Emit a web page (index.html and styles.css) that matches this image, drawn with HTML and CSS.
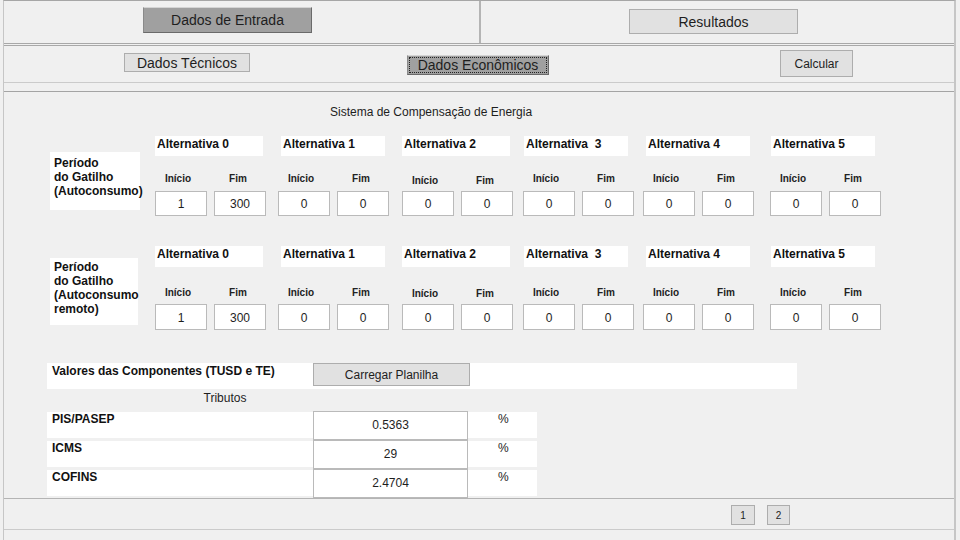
FILE: index.html
```html
<!DOCTYPE html>
<html lang="pt-BR">
<head>
<meta charset="utf-8">
<title>Sistema de Compensação de Energia</title>
<link rel="stylesheet" href="styles.css">
</head>
<body>
<div class="frame">
  <div class="top-bar">
    <div class="tab-half tab-half--left">
      <div class="btn btn--pressed btn--entrada">Dados de Entrada</div>
    </div>
    <div class="tab-half tab-half--right">
      <div class="btn btn--resultados">Resultados</div>
    </div>
  </div>

  <div class="sub-bar">
    <div class="btn btn--tecnicos">Dados Técnicos</div>
    <div class="btn btn--pressed btn--economicos"><span class="focus">Dados Econômicos</span></div>
    <div class="btn btn--calc">Calcular</div>
  </div>

  <div class="spacer-bar"></div>

  <main class="content">
    <div class="title">Sistema de Compensação de Energia</div>

    <section class="block block--1">
      <div class="period period--1">Período<br>do Gatilho<br>(Autoconsumo)</div>
      <div class="groups">
        <div class="group"><div class="alt-head">Alternativa 0</div><div class="sub"><span>Início</span><span>Fim</span></div><div class="pair"><div class="field">1</div><div class="field">300</div></div></div>
        <div class="group"><div class="alt-head alt-head--shift">Alternativa 1</div><div class="sub"><span>Início</span><span>Fim</span></div><div class="pair"><div class="field">0</div><div class="field">0</div></div></div>
        <div class="group"><div class="alt-head">Alternativa 2</div><div class="sub sub--low"><span>Início</span><span>Fim</span></div><div class="pair"><div class="field">0</div><div class="field">0</div></div></div>
        <div class="group"><div class="alt-head alt-head--shift1">Alternativa&nbsp; 3</div><div class="sub"><span>Início</span><span>Fim</span></div><div class="pair"><div class="field">0</div><div class="field">0</div></div></div>
        <div class="group"><div class="alt-head alt-head--shift">Alternativa 4</div><div class="sub"><span>Início</span><span>Fim</span></div><div class="pair"><div class="field">0</div><div class="field">0</div></div></div>
        <div class="group"><div class="alt-head alt-head--shift1">Alternativa 5</div><div class="sub"><span>Início</span><span>Fim</span></div><div class="pair"><div class="field">0</div><div class="field">0</div></div></div>
      </div>
    </section>

    <section class="block block--2">
      <div class="period period--2">Período<br>do Gatilho<br>(Autoconsumo<br>remoto)</div>
      <div class="groups">
        <div class="group"><div class="alt-head">Alternativa 0</div><div class="sub"><span>Início</span><span>Fim</span></div><div class="pair"><div class="field">1</div><div class="field">300</div></div></div>
        <div class="group"><div class="alt-head alt-head--shift">Alternativa 1</div><div class="sub"><span>Início</span><span>Fim</span></div><div class="pair"><div class="field">0</div><div class="field">0</div></div></div>
        <div class="group"><div class="alt-head">Alternativa 2</div><div class="sub sub--low"><span>Início</span><span>Fim</span></div><div class="pair"><div class="field">0</div><div class="field">0</div></div></div>
        <div class="group"><div class="alt-head alt-head--shift1">Alternativa&nbsp; 3</div><div class="sub"><span>Início</span><span>Fim</span></div><div class="pair"><div class="field">0</div><div class="field">0</div></div></div>
        <div class="group"><div class="alt-head alt-head--shift">Alternativa 4</div><div class="sub"><span>Início</span><span>Fim</span></div><div class="pair"><div class="field">0</div><div class="field">0</div></div></div>
        <div class="group"><div class="alt-head alt-head--shift1">Alternativa 5</div><div class="sub"><span>Início</span><span>Fim</span></div><div class="pair"><div class="field">0</div><div class="field">0</div></div></div>
      </div>
    </section>

    <div class="valores">
      <div class="valores-label">Valores das Componentes (TUSD e TE)</div>
      <div class="btn btn--carregar">Carregar Planilha</div>
    </div>

    <div class="tributos-title">Tributos</div>

    <div class="trib-row">
      <div class="trib-label">PIS/PASEP</div>
      <div class="trib-field">0.5363</div>
      <div class="trib-unit">%</div>
    </div>
    <div class="trib-row">
      <div class="trib-label">ICMS</div>
      <div class="trib-field">29</div>
      <div class="trib-unit">%</div>
    </div>
    <div class="trib-row">
      <div class="trib-label">COFINS</div>
      <div class="trib-field">2.4704</div>
      <div class="trib-unit">%</div>
    </div>
  </main>

  <footer class="pager">
    <div class="btn btn--page">1</div>
    <div class="btn btn--page btn--page2">2</div>
  </footer>
</div>
</body>
</html>
```

FILE: styles.css
```css
* { box-sizing: border-box; }

html, body {
  margin: 0;
  padding: 0;
  background: #f0f0f0;
  font-family: "Liberation Sans", Arial, sans-serif;
  color: #1e1e1e;
}

.frame {
  width: 953px;
  margin-left: 3px;
  border-top: 1px solid #a6a6a6;
  border-left: 1px solid #c6c6c6;
  border-right: 2px solid #c6c6c6;
  height: 540px;
}

/* generic button */
.btn {
  background: #e1e1e1;
  border: 1px solid #adadad;
  display: flex;
  align-items: center;
  justify-content: center;
  white-space: nowrap;
  color: #1e1e1e;
}

.btn--pressed {
  background: #a0a0a0;
  border-color: #d4d4d4 #6a6a6a #6a6a6a #8a8a8a;
}

/* top bar */
.top-bar {
  display: flex;
  height: 45px;
  border-bottom: 3px double #a8a8a8;
}

.tab-half { height: 100%; }

.tab-half--left {
  width: 477px;
  border-right: 2px solid #b4b4b4;
  padding: 6px 0 0 139px;
}

.tab-half--right {
  flex: 1;
  padding: 8px 0 0 148px;
}

.btn--entrada {
  width: 169px;
  height: 26px;
  font-size: 14px;
  padding-bottom: 1px;
}

.btn--resultados {
  width: 169px;
  height: 25px;
  font-size: 14px;
}

/* sub bar */
.sub-bar {
  display: flex;
  align-items: flex-start;
  height: 37px;
  border-bottom: 1px solid #cbcbcb;
}

.btn--tecnicos {
  margin: 7px 0 0 120px;
  width: 126px;
  height: 19px;
  font-size: 14px;
}

.btn--economicos {
  margin: 9px 0 0 157px;
  width: 142px;
  height: 20px;
  font-size: 14px;
  padding: 1px;
}

.focus {
  display: flex;
  align-items: center;
  justify-content: center;
  width: 100%;
  height: 100%;
  border: 1px dotted #222;
}

.btn--calc {
  margin: 4px 0 0 231px;
  width: 73px;
  height: 27px;
  font-size: 12px;
}

.spacer-bar {
  height: 9px;
  border-bottom: 1px solid #a4a4a4;
}

/* content */
.content {
  height: 407px;
  padding: 13px 0 0 46px;
  border-bottom: 1px solid #b4b4b4;
}

.title {
  font-size: 12px;
  line-height: 14px;
  padding-left: 280px;
}

.block {
  display: flex;
  align-items: flex-start;
}

.block--1 { margin-top: 17px; }
.block--2 { margin-top: 30px; }

.period {
  width: 90px;
  margin-right: 15px;
  background: #fff;
  font-size: 12px;
  font-weight: bold;
  line-height: 14px;
  padding-left: 4px;
  color: #111;
}

.period--1 { margin-top: 16px; height: 58px; padding-top: 4px; }
.period--2 { margin-top: 12px; height: 67px; width: 88px; margin-right: 17px; padding-top: 2px; }

.groups {
  display: grid;
  grid-template-columns: 123px 124px 121px 120px 127px 111px;
}

.alt-head {
  width: 108px;
  height: 20px;
  background: #fff;
  font-size: 12px;
  font-weight: bold;
  line-height: 14px;
  padding: 1px 0 0 2px;
  color: #111;
}

.block--2 .alt-head { height: 21px; }

.alt-head--shift { margin-left: 3px; width: 104px; }
.alt-head--shift1 { margin-left: 1px; width: 104px; }

.sub {
  display: grid;
  grid-template-columns: 52px 52px;
  column-gap: 7px;
  height: 35px;
  padding-top: 17px;
  font-size: 10px;
  font-weight: bold;
  line-height: 12px;
  color: #222;
}

.sub--low { padding-top: 19px; }

.block--2 .sub { height: 37px; padding-top: 20px; }
.block--2 .sub--low { padding-top: 21px; }

.sub span { text-align: center; }
.sub span:first-child { padding-right: 6px; }
.sub span:last-child { padding-right: 4px; }

.pair {
  display: grid;
  grid-template-columns: 52px 52px;
  column-gap: 7px;
}

.field {
  height: 25px;
  background: #fff;
  border: 1px solid #bababa;
  font-size: 12px;
  line-height: 14px;
  padding-top: 5px;
  text-align: center;
  color: #1e1e1e;
}

.block--2 .field { height: 26px; padding-top: 6px; }

/* valores */
.valores {
  display: flex;
  margin: 33px 0 0 -3px;
  width: 750px;
  height: 26px;
  background: #fff;
}

.valores-label {
  width: 266px;
  padding: 1px 0 0 5px;
  font-size: 12px;
  font-weight: bold;
  line-height: 14px;
  color: #111;
}

.btn--carregar {
  width: 157px;
  height: 23px;
  font-size: 12px;
}

.tributos-title {
  width: 356px;
  margin: 2px 0 0 -3px;
  text-align: center;
  font-size: 12px;
  line-height: 14px;
}

.trib-row {
  display: flex;
  align-items: flex-start;
  width: 490px;
  height: 26px;
  margin: 7px 0 0 -3px;
  background: #fff;
}

.trib-row + .trib-row { margin-top: 3px; }

.trib-label {
  width: 266px;
  padding-left: 5px;
  font-size: 12px;
  font-weight: bold;
  line-height: 14px;
  color: #111;
}

.trib-field {
  width: 155px;
  height: 29px;
  margin-top: -1px;
  background: #fff;
  border: 1px solid #bababa;
  font-size: 12px;
  line-height: 14px;
  padding-top: 6px;
  text-align: center;
}

.trib-unit {
  margin-left: 30px;
  font-size: 12px;
  line-height: 14px;
}

/* pager */
.pager {
  display: flex;
  align-items: flex-start;
  height: 31px;
  padding: 6px 0 0 727px;
  border-bottom: 1px solid #cbcbcb;
}

.btn--page {
  width: 24px;
  height: 20px;
  font-size: 10px;
}

.btn--page2 {
  margin-left: 12px;
  width: 23px;
}
```
